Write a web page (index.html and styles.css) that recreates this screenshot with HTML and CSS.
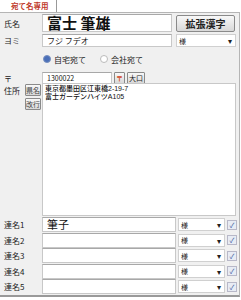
FILE: index.html
```html
<!DOCTYPE html>
<html lang="ja">
<head>
    <meta charset="UTF-8">
    <title>宛て名専用</title>
    <link rel="stylesheet" href="styles.css">
</head>
<body>
    <div class="tabs">
        <div class="tab">宛て名専用</div>
    </div>
    <div class="panel">
        <div class="row name-row">
            <span class="label">氏名</span>
            <div class="field big">富士 筆雄</div>
            <button class="btn big-btn">拡張漢字</button>
        </div>
        <div class="row yomi-row">
            <span class="label">ヨミ</span>
            <div class="field small">フジ フデオ</div>
            <div class="select wide"><span>様</span><span class="arrow">▾</span></div>
        </div>
        <div class="row radio-row">
            <label class="radio"><span class="dot on"></span>自宅宛て</label>
            <label class="radio"><span class="dot"></span>会社宛て</label>
        </div>
        <div class="row zip-row">
            <span class="label">〒</span>
            <div class="field zip">1300022</div>
            <button class="btn tiny zip-btn">〒</button>
            <button class="btn tiny">大口</button>
        </div>
        <div class="row addr-row">
            <div class="addr-side">
                <span class="label">住所</span>
                <div class="addr-btns">
                    <button class="btn tiny">県名</button>
                    <button class="btn tiny">改行</button>
                </div>
            </div>
            <div class="area">
                <div class="line">東京都墨田区江東橋2-19-7</div>
                <div class="line">富士ガーデンハイツA105</div>
            </div>
        </div>
        <div class="joint">
            <div class="row jrow">
                <span class="label">連名1</span>
                <div class="field jf">筆子</div>
                <div class="select"><span>様</span><span class="arrow">▾</span></div>
                <span class="check">✓</span>
            </div>
            <div class="row jrow">
                <span class="label">連名2</span>
                <div class="field jf"></div>
                <div class="select"><span>様</span><span class="arrow">▾</span></div>
                <span class="check">✓</span>
            </div>
            <div class="row jrow">
                <span class="label">連名3</span>
                <div class="field jf"></div>
                <div class="select"><span>様</span><span class="arrow">▾</span></div>
                <span class="check">✓</span>
            </div>
            <div class="row jrow">
                <span class="label">連名4</span>
                <div class="field jf"></div>
                <div class="select"><span>様</span><span class="arrow">▾</span></div>
                <span class="check">✓</span>
            </div>
            <div class="row jrow">
                <span class="label">連名5</span>
                <div class="field jf"></div>
                <div class="select"><span>様</span><span class="arrow">▾</span></div>
                <span class="check">✓</span>
            </div>
        </div>
    </div>
</body>
</html>
```
FILE: styles.css
```css
body {
    margin: 0;
    width: 241px;
    height: 300px;
    background-color: #ffffff;
    font-family: "Noto Sans CJK JP", "Noto Sans", sans-serif;
    font-size: 9px;
    color: #222;
    overflow: hidden;
}

.tabs {
    height: 12px;
    display: flex;
    background-color: #fff;
}

.tab {
    width: 57px;
    padding-left: 11px;
    box-sizing: border-box;
    border-right: 1px solid #999;
    color: #c0392b;
    font-weight: bold;
    font-size: 7.5px;
    line-height: 12px;
    white-space: nowrap;
}

.panel {
    height: 285px;
    box-sizing: border-box;
    background-color: #f0f0f0;
    border: 1px solid #b5b5b5;
    border-bottom: 2px solid #999;
    border-left: none;
    width: 240px;
    padding-top: 1px;
}

.row {
    display: flex;
    align-items: center;
}

.label {
    width: 42px;
    padding-left: 4px;
    box-sizing: border-box;
    flex-shrink: 0;
    font-size: 8px;
    white-space: nowrap;
}

.field {
    background-color: #fff;
    border: 1px solid #c8c8c8;
    border-top-color: #a8a8a8;
    box-sizing: border-box;
    padding-left: 4px;
    color: #111;
}

.big {
    width: 130px;
    height: 18px;
    font-size: 15px;
    font-weight: bold;
    line-height: 16px;
}

.name-row .label {
    align-self: flex-start;
    padding-top: 4px;
}

.btn {
    font-family: inherit;
    background: linear-gradient(#f8f8f8, #d8d8d8);
    border: 1px solid #8a8a8a;
    border-radius: 2px;
    color: #222;
    padding: 0;
    cursor: pointer;
    white-space: nowrap;
}

.big-btn {
    margin-left: 4px;
    width: 59px;
    height: 17px;
    font-size: 10px;
    font-weight: bold;
}

.yomi-row {
    margin-top: 2px;
}

.small {
    width: 130px;
    height: 13px;
    font-size: 8px;
    line-height: 11px;
}

.select {
    width: 47px;
    height: 13px;
    margin-left: 2px;
    background-color: #fff;
    border: 1px solid #d0d0d0;
    box-sizing: border-box;
    display: flex;
    justify-content: space-between;
    align-items: center;
    padding: 0 3px 0 2px;
    font-size: 7px;
}

.select.wide {
    width: 60px;
    margin-left: 4px;
}

.arrow {
    font-size: 8px;
}

.radio-row {
    padding-left: 43px;
    margin-top: 6px;
    height: 12px;
    gap: 14px;
    font-size: 8px;
}

.radio {
    display: flex;
    align-items: center;
    gap: 3px;
}

.dot {
    width: 6px;
    height: 6px;
    border-radius: 50%;
    border: 1px solid #bbb;
    background-color: #fff;
}

.dot.on {
    background-color: #4a6fb8;
    border-color: #7890c0;
}

.zip-row {
    margin-top: 7px;
}

.zip {
    width: 70px;
    height: 12px;
    font-size: 7px;
    line-height: 10px;
}

.tiny {
    height: 12px;
    font-size: 7px;
    padding: 0;
    border-radius: 1px;
}

.zip-btn {
    margin-left: 2px;
    width: 11px;
    color: #d04020;
    font-weight: bold;
}

.zip-btn + .tiny {
    margin-left: 2px;
    width: 18px;
}

.addr-row {
    align-items: flex-start;
    margin-top: -1px;
}

.addr-side {
    width: 42px;
    flex-shrink: 0;
    display: flex;
}

.addr-side .label {
    width: 25px;
    padding-top: 2px;
}

.addr-btns {
    display: flex;
    flex-direction: column;
    gap: 2px;
    padding-top: 1px;
}

.addr-btns .tiny {
    width: 16px;
    font-size: 7px;
    color: #444;
    overflow: visible;
}

.area {
    width: 194px;
    height: 133px;
    background-color: #fff;
    border: 1px solid #c8c8c8;
    box-sizing: border-box;
    padding: 1px 2px;
    font-family: "Liberation Sans", "Noto Sans CJK JP", sans-serif;
    font-size: 7px;
    color: #111;
    font-weight: 500;
}

.line {
    height: 7.5px;
    line-height: 7.5px;
    white-space: nowrap;
}

.joint {
    margin-top: 1px;
}

.jrow {
    height: 15.5px;
}

.jf {
    width: 134px;
    height: 15px;
    font-size: 11px;
    line-height: 13px;
}

.check {
    margin-left: 2px;
    width: 8px;
    height: 8px;
    border: 1px solid #b8b8c8;
    background-color: #e8ecf4;
    color: #4060a0;
    font-size: 7px;
    line-height: 8px;
    text-align: center;
}
```
